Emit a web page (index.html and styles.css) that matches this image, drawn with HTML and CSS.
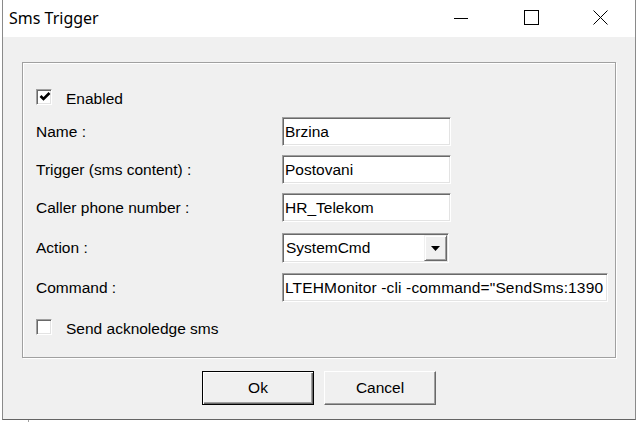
FILE: index.html
```html
<!DOCTYPE html>
<html lang="en">
  <head>
    <meta charset="UTF-8" />
    <title>Sms Trigger</title>
    <link rel="stylesheet" href="styles.css">
  </head>
  <body>
    <div class="window">
      <div class="titlebar">
        <span class="title">Sms Trigger</span>
        <div class="caption">
          <span class="cap-btn">
            <svg width="14" height="14" viewBox="0 0 14 14"><path d="M0 7.5 H14" stroke="#000" stroke-width="1" /></svg>
          </span>
          <span class="cap-btn">
            <svg width="15" height="15" viewBox="0 0 15 15"><rect x="0.5" y="0.5" width="14" height="14" fill="none" stroke="#000" stroke-width="1" /></svg>
          </span>
          <span class="cap-btn close">
            <svg width="15" height="15" viewBox="0 0 15 15"><path d="M0.5 0.5 L14.5 14.5 M14.5 0.5 L0.5 14.5" stroke="#000" stroke-width="1" /></svg>
          </span>
        </div>
      </div>

      <div class="client">
        <div class="group">
          <div class="check-row">
            <span class="checkbox">
              <svg width="12" height="12" viewBox="0 0 12 12"><path d="M1.5 5 L4.5 8 L10.5 2" fill="none" stroke="#000" stroke-width="2.6" /></svg>
            </span>
            <span>Enabled</span>
          </div>

          <!-- label / value pairs -->
          <div class="fields">
            <span class="label">Name :</span>
            <div class="textbox">Brzina</div>
            <span class="label">Trigger (sms content) :</span>
            <div class="textbox">Postovani</div>
            <span class="label">Caller phone number :</span>
            <div class="textbox">HR_Telekom</div>
            <span class="label">Action :</span>
            <div class="combo">
              <span class="combo-text">SystemCmd</span>
              <span class="combo-btn">
                <svg width="9" height="5" viewBox="0 0 9 5"><path d="M0 0 H9 L4.5 5 Z" fill="#000" /></svg>
              </span>
            </div>
            <span class="label">Command :</span>
            <div class="textbox wide">LTEHMonitor -cli -command="SendSms:1390</div>
          </div>

          <div class="check-row ack">
            <span class="checkbox"></span>
            <span>Send acknoledge sms</span>
          </div>
        </div>

        <div class="buttons">
          <button class="btn default">Ok</button>
          <button class="btn">Cancel</button>
        </div>
      </div>
    </div>
    <div class="behind">
      <span class="tree-line"></span>
    </div>
  </body>
</html>
```

FILE: styles.css
```css
body {
  margin: 0;
  width: 636px;
  height: 422px;
  overflow: hidden;
  background: #fff;
  font-family: 'Liberation Sans', Arial, sans-serif;
  font-size: 15.5px;
  color: #000;
}
.window {
  margin-left: 2px;
  width: 634px;
  height: 420px;
  box-sizing: border-box;
  border-left: 1px solid #8a8a8a;
  border-right: 1px solid #8a8a8a;
  border-bottom: 1px solid #646464;
  background: #f0f0f0;
  display: flex;
  flex-direction: column;
}
.titlebar {
  height: 37px;
  flex: none;
  background: #fff;
  display: flex;
  align-items: center;
}
.title {
  margin-left: 6px;
  margin-top: -1px;
  font-family: 'Noto Sans', 'Open Sans', sans-serif;
  font-size: 16px;
  color: #000;
}
.caption {
  margin-left: auto;
  height: 100%;
  display: flex;
}
.cap-btn {
  width: 70px;
  height: 35px;
  display: flex;
  align-items: center;
  justify-content: center;
}
.cap-btn.close {
  width: 69px;
}
.cap-btn svg {
  display: block;
}
.client {
  flex: 1;
}
.group {
  width: 594px;
  height: 296px;
  box-sizing: border-box;
  margin: 25px 0 0 19px;
  padding: 24px 0 0 13px;
  border: 1px solid #a0a0a0;
  box-shadow: inset 1px 1px #fff, 1px 1px #fff;
}
.check-row {
  height: 20px;
  display: flex;
  align-items: center;
  gap: 14px;
}
.check-row span:last-child {
  margin-top: 3px;
}
.check-row.ack {
  margin-top: 15px;
}
.checkbox {
  width: 16px;
  height: 16px;
  box-sizing: border-box;
  background: #fff;
  border: 1px solid;
  border-color: #a0a0a0 #fff #fff #a0a0a0;
  box-shadow: inset 1px 1px #696969, inset -1px -1px #e3e3e3;
  display: flex;
  align-items: center;
  justify-content: center;
  margin-top: 0 !important;
}
.checkbox svg {
  display: block;
  margin: 0 0 0 1px;
}
.fields {
  margin-top: 10px;
  display: grid;
  grid-template-columns: 246px auto;
  grid-template-rows: 38px 38px 40px 40px 29px;
  align-items: start;
}
.label {
  line-height: 29px;
}
.textbox {
  width: 169px;
  height: 29px;
  box-sizing: border-box;
  padding-left: 2px;
  line-height: 27px;
  background: #fff;
  border: 1px solid;
  border-color: #a0a0a0 #fff #fff #a0a0a0;
  box-shadow: inset 1px 1px #696969, inset -1px -1px #e3e3e3;
  white-space: nowrap;
  overflow: hidden;
}
.textbox.wide {
  width: 326px;
  letter-spacing: 0.15px;
}
.combo {
  width: 167px;
  height: 30px;
  box-sizing: border-box;
  background: #fff;
  border: 1px solid;
  border-color: #a0a0a0 #fff #fff #a0a0a0;
  box-shadow: inset 1px 1px #696969, inset -1px -1px #e3e3e3;
  display: flex;
  padding: 1px;
}
.combo-text {
  flex: 1;
  padding-left: 2px;
  line-height: 26px;
}
.combo-btn {
  width: 23px;
  box-sizing: border-box;
  background: #f0f0f0;
  border: 1px solid;
  border-color: #f0f0f0 #696969 #696969 #f0f0f0;
  box-shadow: inset 1px 1px #fff, inset -1px -1px #a0a0a0;
  display: flex;
  align-items: center;
  justify-content: center;
}
.combo-btn svg {
  display: block;
}
.buttons {
  margin-top: 13px;
  display: flex;
  justify-content: center;
  gap: 10px;
}
.btn {
  width: 112px;
  height: 34px;
  padding: 0;
  font-family: 'Liberation Sans', Arial, sans-serif;
  font-size: 15.5px;
  color: #000;
  background: #f0f0f0;
  border: 1px solid;
  border-color: #fff #696969 #696969 #fff;
  box-shadow: inset -1px -1px #a0a0a0;
  border-radius: 0;
}
.btn.default {
  border: 1px solid #000;
  box-shadow: inset 1px 1px #fff, inset -1px -1px #696969, inset -2px -2px #a0a0a0;
}
.behind {
  height: 2px;
  display: flex;
  background: #fff;
}
.tree-line {
  width: 1px;
  margin-left: 28px;
  background: #a0a0a0;
}
```
